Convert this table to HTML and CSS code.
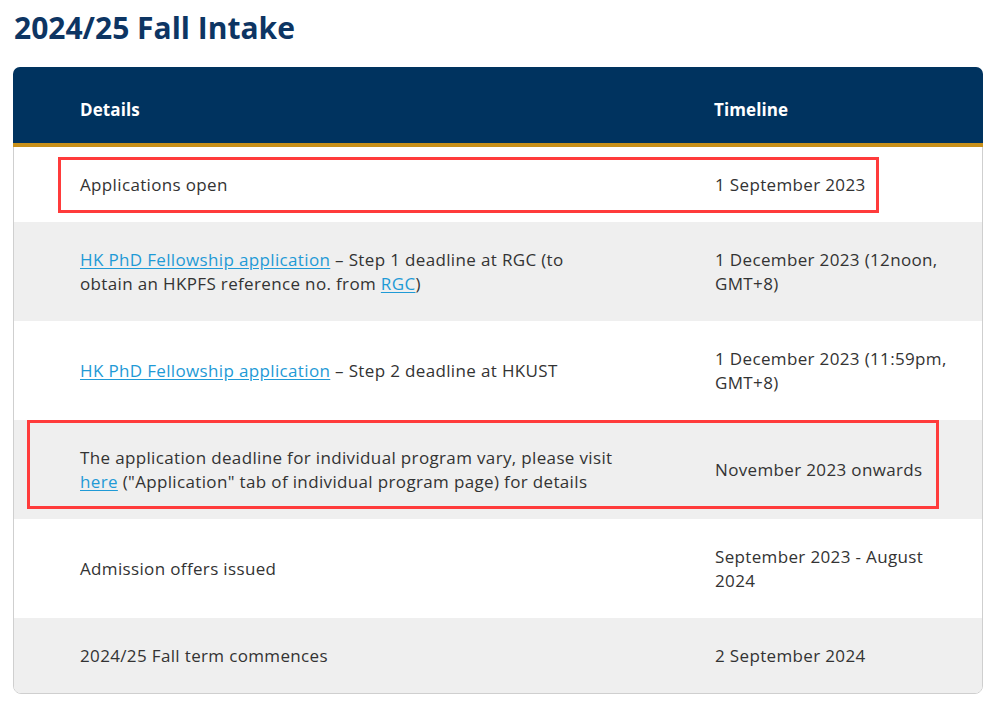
FILE: index.html
```html
<!DOCTYPE html>
<html lang="en">
<head>
<meta charset="utf-8">
<title>2024/25 Fall Intake</title>
<link rel="stylesheet" href="styles.css">
</head>
<body>
<h1 class="title">2024/25 Fall Intake</h1>
<div class="card">
  <div class="row head">
    <div class="c-detail">Details</div>
    <div class="c-time">Timeline</div>
  </div>
  <div class="row">
    <div class="c-detail">Applications open</div>
    <div class="c-time">1 September 2023</div>
    <div class="mark mark-1"></div>
  </div>
  <div class="row alt">
    <div class="c-detail"><a href="#">HK PhD Fellowship application</a> – Step 1 deadline at RGC (to obtain an HKPFS reference no. from <a href="#">RGC</a>)</div>
    <div class="c-time">1 December 2023 (12noon, GMT+8)</div>
  </div>
  <div class="row">
    <div class="c-detail"><a href="#">HK PhD Fellowship application</a> – Step 2 deadline at HKUST</div>
    <div class="c-time">1 December 2023 (11:59pm, GMT+8)</div>
  </div>
  <div class="row alt">
    <div class="c-detail">The application deadline for individual program vary, please visit <a href="#">here</a> ("Application" tab of individual program page) for details</div>
    <div class="c-time">November 2023 onwards</div>
    <div class="mark mark-2"></div>
  </div>
  <div class="row">
    <div class="c-detail">Admission offers issued</div>
    <div class="c-time">September 2023 - August 2024</div>
  </div>
  <div class="row alt last">
    <div class="c-detail">2024/25 Fall term commences</div>
    <div class="c-time">2 September 2024</div>
  </div>
</div>
</body>
</html>
```
FILE: styles.css
```css
html, body {
  margin: 0;
  padding: 0;
  background: #ffffff;
}
body {
  padding: 0 15px 0 13px;
  font-family: "Open Sans", "Lato", sans-serif;
  color: #333333;
}
.title {
  margin: 0;
  padding: 8px 0 0 1px;
  font-size: 30px;
  line-height: 40px;
  font-weight: 700;
  color: #0d3563;
}
.card {
  margin-top: 19px;
  border: 1px solid #cfcfcf;
  border-radius: 8px;
  position: relative;
}
.row {
  display: grid;
  grid-template-columns: 668px 1fr;
  align-items: center;
  position: relative;
  font-size: 17px;
  line-height: 24px;
  letter-spacing: 0.35px;
  background: #ffffff;
}
.row.alt {
  background: #efefef;
}
.row.last {
  border-radius: 0 0 7px 7px;
}
.c-detail {
  padding: 26px 67px 25px 66px;
}
.c-time {
  padding: 26px 30px 25px 33px;
}
.head {
  background: #00335f;
  color: #ffffff;
  font-weight: 700;
  letter-spacing: 0.1px;
  border-radius: 7px 7px 0 0;
  border-bottom: 4px solid #c8901a;
  margin: -1px -1px 0 -1px;
}
.head .c-detail,
.head .c-time {
  padding-top: 33px;
  padding-bottom: 24px;
  line-height: 19px;
}
.head .c-detail {
  padding-left: 67px;
}
a {
  color: #1f9ad6;
  text-decoration: underline;
  text-underline-offset: 2px;
}
.mark {
  position: absolute;
  border: 3px solid #ff3b3b;
  pointer-events: none;
}
.mark-1 {
  left: 44px;
  top: 10px;
  width: 815px;
  height: 50px;
}
.mark-2 {
  left: 13px;
  top: 0px;
  width: 906px;
  height: 83px;
}
```
